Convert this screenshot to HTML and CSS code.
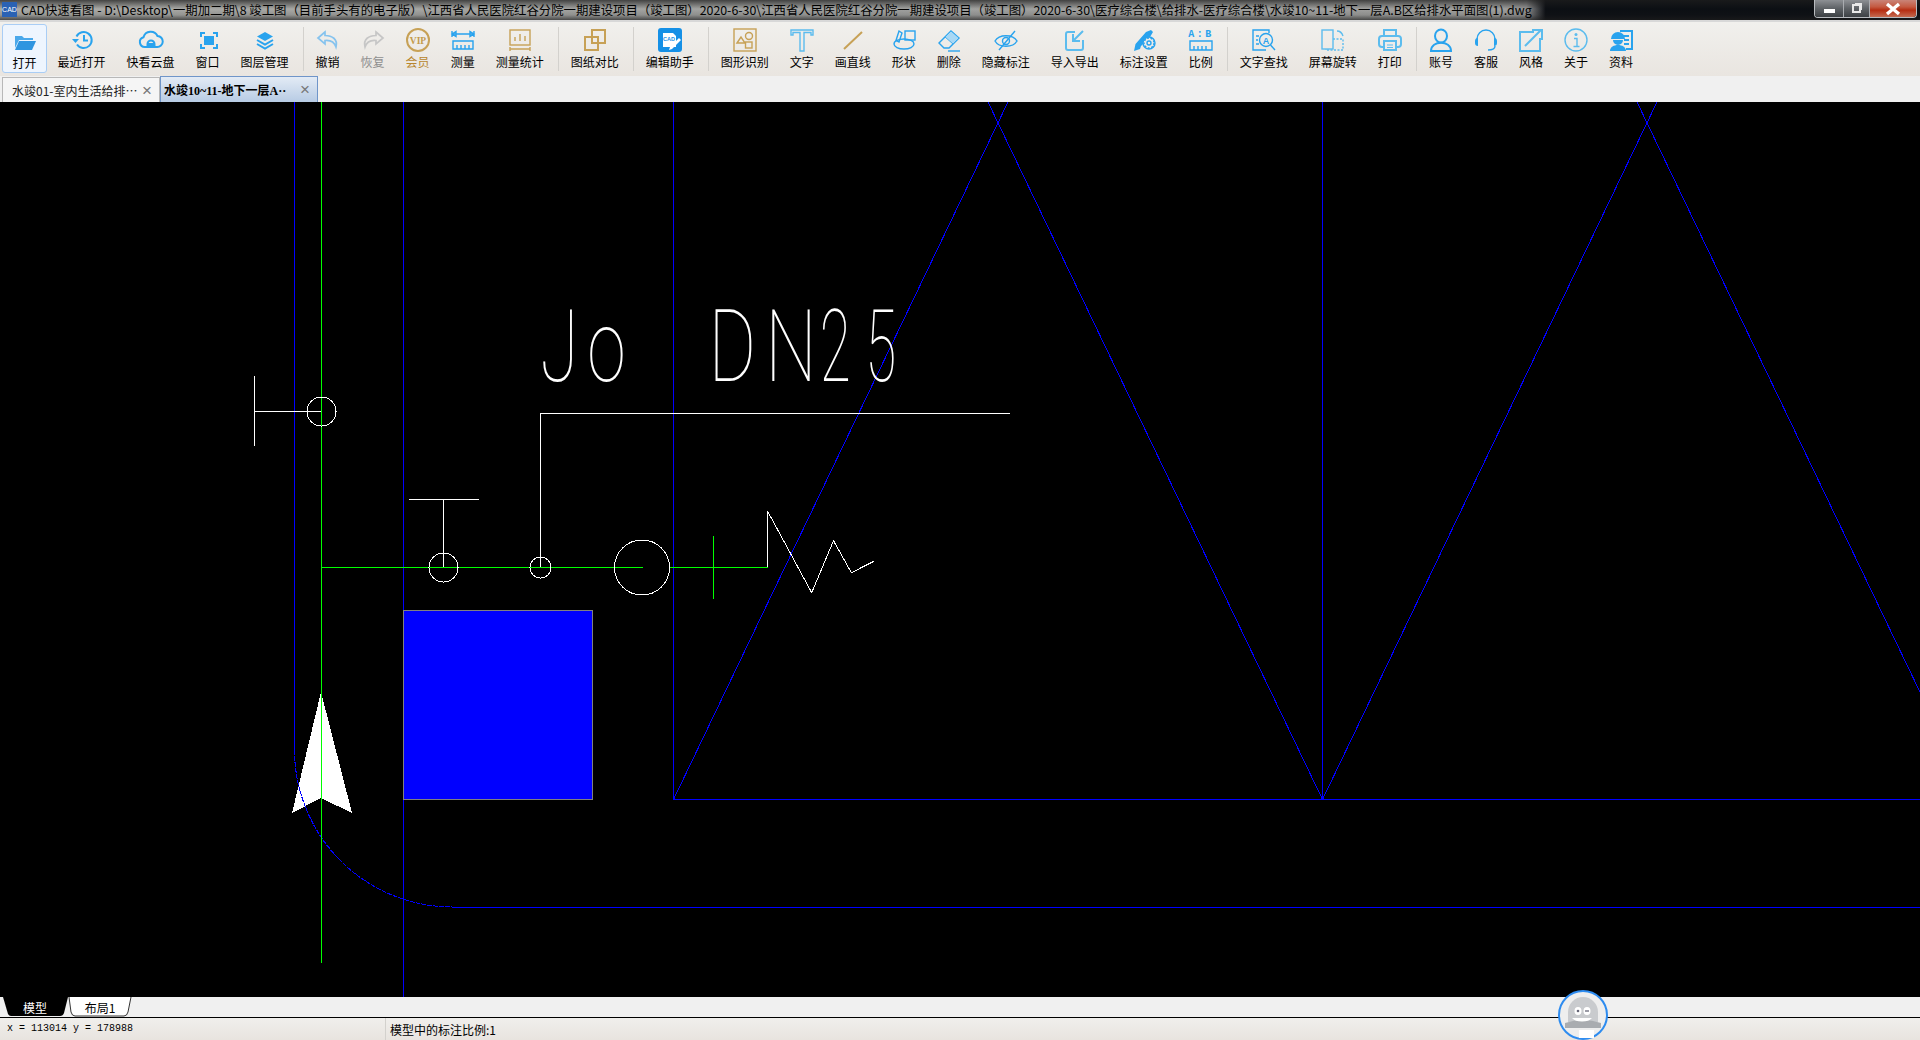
FILE: index.html
```html
<!DOCTYPE html>
<html lang="zh-CN">
<head>
<meta charset="utf-8">
<title>CAD快速看图</title>
<link rel="stylesheet" href="styles.css">
</head>
<body>
<div class="app">
  <header class="titlebar">
    <div class="app-logo">CAD</div>
    <div class="title-text">CAD快速看图 - D:\Desktop\一期加二期\8 竣工图（目前手头有的电子版）\江西省人民医院红谷分院一期建设项目（竣工图）2020-6-30\江西省人民医院红谷分院一期建设项目（竣工图）2020-6-30\医疗综合楼\给排水-医疗综合楼\水竣10~11-地下一层A.B区给排水平面图(1).dwg</div>
    <div class="win-buttons">
      <div class="win-btn win-min"><span class="glyph-min"></span></div>
      <div class="win-btn win-max"><span class="glyph-max"></span></div>
      <div class="win-btn win-close">
        <svg width="20" height="14" viewBox="0 0 20 14"><path d="M4 2l12 10M16 2L4 12" stroke="#fff" stroke-width="3.4" fill="none"/></svg>
      </div>
    </div>
  </header>

  <nav class="toolbar">
    <div class="tool active"><svg class="ico" viewBox="0 0 24 24"><path d="M2 7h7l2 2h9v2H6l-4 8z" fill="#4aa8ea"/><path d="M6 12h17l-4 9H2z" fill="#2f95e0"/></svg><span>打开</span></div>
    <div class="tool"><svg class="ico line-blue" viewBox="0 0 24 24"><path d="M6.5 8.5A8 8 0 1 1 7 16.5"/><path class="solid" d="M2 11h7l-3.5 4z"/><path d="M14 7v5.5h4"/></svg><span>最近打开</span></div>
    <div class="tool"><svg class="ico line-blue" viewBox="0 0 24 24"><path d="M6 19a5 5 0 0 1-1.500-9.800 7.500 7.500 0 0 1 14-1.200A5.500 5.500 0 0 1 18 19z"/><path d="M8.500 18v-2a3.500 3.500 0 0 1 7 0v2zM8.500 16h7"/></svg><span>快看云盘</span></div>
    <div class="tool"><svg class="ico line-blue" viewBox="0 0 24 24"><path d="M5 9V5h4M17 5h4v4M21 16v4h-4M9 20H5v-4"/><rect class="solid" x="8" y="8" width="10" height="9"/></svg><span>窗口</span></div>
    <div class="tool"><svg class="ico line-blue" viewBox="0 0 24 24"><path class="solid" d="M12 4l8 4.500-8 4.500-8-4.500z"/><path d="M4 12l8 4.500 8-4.500M4 16l8 4.500 8-4.500"/></svg><span>图层管理</span></div>
    <div class="sep"></div>
    <div class="tool"><svg class="ico line-pale" viewBox="0 0 24 24"><path d="M9 4L2 10l7 6v-3.500c5-.5 9 .5 11 6.500 2-8-4-11.500-11-11.500z"/></svg><span>撤销</span></div>
    <div class="tool muted"><svg class="ico line-grey" viewBox="0 0 24 24"><path d="M15 4l7 6-7 6v-3.500c-5-.5-9 .5-11 6.500-2-8 4-11.500 11-11.500z"/></svg><span>恢复</span></div>
    <div class="tool vip"><svg class="ico line-gold" viewBox="0 0 24 24"><circle cx="12" cy="12" r="11"/><text class="vip-text" x="12" y="16">VIP</text></svg><span>会员</span></div>
    <div class="tool"><svg class="ico line-blue thin" viewBox="0 0 24 24"><path d="M1 3v6M23 3v6M1 6h22M1 6l4-2.500v5zM23 6l-4-2.500v5z"/><path d="M2 13h20v8H2zM6 17v4M10 17v4M14 17v4M18 17v4"/></svg><span>测量</span></div>
    <div class="tool"><svg class="ico line-gold thin" viewBox="0 0 24 24"><rect x="2" y="2" width="20" height="15"/><path d="M7 13V9M12 13V6M17 13v-5M2 21h20M2 19v4M22 19v4"/></svg><span>测量统计</span></div>
    <div class="sep"></div>
    <div class="tool"><svg class="ico line-gold" viewBox="0 0 24 24"><rect x="9" y="2" width="13" height="13"/><rect x="2" y="9" width="13" height="13"/></svg><span>图纸对比</span></div>
    <div class="sep"></div>
    <div class="tool"><svg class="ico" viewBox="0 0 24 24"><rect width="24" height="24" rx="3" fill="#1590e6"/><path d="M5 5h10l3 3v11H5z" fill="#fff"/><text class="cad-text" x="11" y="13">CAD</text><path d="M12 19l9-9 2 2-9 9-3 1z" fill="#fff"/></svg><span>编辑助手</span></div>
    <div class="sep"></div>
    <div class="tool"><svg class="ico line-gold thin" viewBox="0 0 24 24"><rect x="1" y="1" width="22" height="22"/><path d="M4 15l4-6 4 6z"/><circle cx="16" cy="8" r="3.500"/><rect x="12.500" y="14" width="6.500" height="6"/></svg><span>图形识别</span></div>
    <div class="tool"><svg class="ico line-sky thin" viewBox="0 0 24 24"><path d="M1 2h22v5h-2V4.500h-7V23h-4V4.500H3V7H1z"/></svg><span>文字</span></div>
    <div class="tool"><svg class="ico line-gold" viewBox="0 0 24 24"><path d="M3 21L21 4"/></svg><span>画直线</span></div>
    <div class="tool"><svg class="ico line-blue thin" viewBox="0 0 24 24"><rect x="13" y="3" width="10" height="9"/><ellipse cx="12" cy="16" rx="10" ry="5"/><path d="M7 3l3 2-3 9-3-1.500z"/></svg><span>形状</span></div>
    <div class="tool"><svg class="ico line-blue thin" viewBox="0 0 24 24"><path d="M14 3l8 7-10 10H7l-5-5z"/><path class="solid-pale" d="M14 3l8 7-6 6-8-7z"/><path d="M11 23h12"/></svg><span>删除</span></div>
    <div class="tool"><svg class="ico line-blue thin" viewBox="0 0 24 24"><path d="M1 13c4-7 18-7 22 0-4 7-18 7-22 0z"/><circle cx="12" cy="13" r="3.500"/><path d="M21 3L5 22"/></svg><span>隐藏标注</span></div>
    <div class="tool"><svg class="ico line-sky" viewBox="0 0 24 24"><path d="M12 4H5a2 2 0 0 0-2 2v14a2 2 0 0 0 2 2h13a2 2 0 0 0 2-2v-8"/><path d="M20 3L10 13M10 6v7h7"/></svg><span>导入导出</span></div>
    <div class="tool"><svg class="ico line-blue thin" viewBox="0 0 24 24"><path class="solid" d="M2 23l1.500-7L14 4l5-2 2 2-3 5-9 9-1 3z"/><circle class="paper" cx="17" cy="15" r="6"/><circle cx="17" cy="15" r="2"/><circle class="dash" cx="17" cy="15" r="5"/></svg><span>标注设置</span></div>
    <div class="tool"><svg class="ico line-blue thin" viewBox="0 0 24 24"><text class="ab-text" x="12" y="9">A:B</text><path d="M1 13h22v9H1zM5 18v4M9 18v4M13 18v4M17 18v4"/></svg><span>比例</span></div>
    <div class="sep"></div>
    <div class="tool"><svg class="ico line-blue thin" viewBox="0 0 24 24"><path d="M6 2H1v20h13M1 2h16v3"/><path d="M4 8h3M4 12h2M4 16h3"/><circle cx="14" cy="12" r="6.500"/><path d="M18.500 17l4.500 5"/><text class="find-text" x="14" y="15.500">A</text></svg><span>文字查找</span></div>
    <div class="tool"><svg class="ico line-sky thin" viewBox="0 0 24 24"><rect x="1" y="2" width="11" height="19"/><path class="dash" d="M12 11h10v11H5v-1"/><path d="M16 3c3 0 5 2 6 5"/></svg><span>屏幕旋转</span></div>
    <div class="tool"><svg class="ico line-sky" viewBox="0 0 24 24"><path d="M6 8V2h12v6"/><rect x="1" y="8" width="22" height="11" rx="3"/><rect class="paper" x="6" y="13" width="12" height="9"/><path d="M9 17h6M9 19.500h6" stroke-width="1"/></svg><span>打印</span></div>
    <div class="sep"></div>
    <div class="tool"><svg class="ico line-blue" viewBox="0 0 24 24"><ellipse cx="12" cy="8" rx="6" ry="6.500"/><path d="M2 23c0-11 20-11 20 0z"/></svg><span>账号</span></div>
    <div class="tool"><svg class="ico line-blue thin" viewBox="0 0 24 24"><path d="M3 13v-2a9 9 0 0 1 18 0v2"/><path class="solid" d="M1 13a3 3 0 0 1 3-3v8a3 3 0 0 1-3-3zM23 13a3 3 0 0 0-3-3v8a3 3 0 0 0 3-3z"/><path d="M21 18c0 3-3 4-7 4"/></svg><span>客服</span></div>
    <div class="tool"><svg class="ico line-sky" viewBox="0 0 24 24"><path d="M15 4H1v19h20V10"/><path d="M6 18L22 2M13 2h10v10"/></svg><span>风格</span></div>
    <div class="tool"><svg class="ico line-sky thin" viewBox="0 0 24 24"><circle cx="12" cy="12" r="11"/><circle class="solid" cx="12" cy="6.500" r="1.500"/><path d="M10 10.500h3v8M9.500 18.500h6"/></svg><span>关于</span></div>
    <div class="tool"><svg class="ico line-blue" viewBox="0 0 24 24"><path d="M11 3h12v18H17M14 8h6M15 12h5M15 16h5"/><path class="solid" d="M2 11a7 7 0 0 1 14 0zM4 12h10a5 5 0 0 1-10 0zM1 23c0-8 16-8 16 0z"/></svg><span>资料</span></div>
  </nav>

  <div class="doc-tabs">
    <div class="doc-tab"><span class="doc-name">水竣01-室内生活给排…</span><span class="doc-close">×</span></div>
    <div class="doc-tab current"><span class="doc-name">水竣10~11-地下一层A··</span><span class="doc-close">×</span></div>
  </div>

  <main class="canvas">
    <svg class="drawing" viewBox="0 102 1920 895" width="1920" height="895">
      <g class="blue">
        <path d="M294.500 102V750"/>
        <path class="arc" d="M294.500 750A158 157 0 0 0 452 907"/>
        <path d="M452 907.500H1920"/>
        <path d="M403.500 102V997"/>
        <path d="M673.500 102V799.500H1920"/>
        <path d="M1322.500 102V799.500"/>
        <path d="M673.500 799.500L1008 102"/>
        <path d="M1322.500 799.500L988 102"/>
        <path d="M1322.500 799.500L1657 102"/>
        <path d="M1971.500 799.500L1637 102"/>
      </g>
      <rect class="sq" x="403.500" y="610.500" width="189" height="189"/>
      <path class="arrow" d="M321 692L352 813 321 798 292 813z"/>
      <path class="arc blue-arc" d="M294.500 750A158 157 0 0 0 340 860"/>
      <g class="green">
        <path d="M321.500 102V963"/>
        <path d="M321.500 567.500H643M669.500 567.500H767.500"/>
        <path d="M713.500 536V599"/>
      </g>
      <g class="white">
        <path d="M254.500 376V446M254.500 411.500H321"/>
        <circle cx="321.500" cy="411.500" r="14.500"/>
        <path d="M540.500 567V413.500H1010"/>
        <path d="M409 499.500H479M443.500 499.500V567"/>
        <circle cx="443.500" cy="567.500" r="14.500"/>
        <circle cx="540.500" cy="567.500" r="10.500"/>
        <circle cx="642" cy="567.500" r="27.500"/>
        <path d="M767.500 567V511L811.700 592.700 833.500 540.700 851.400 572.700 873.800 561.300"/>
      </g>
      <text class="cad-note" transform="scale(.69 1)" y="381" x="783 851">Jo</text>
      <text class="cad-note" transform="scale(.72 1)" y="381" x="984 1063">DN</text>
      <text class="cad-note" transform="scale(.56 1)" y="381" x="1464 1545">25</text>
    </svg>
  </main>

  <div class="sheet-tabs">
    <div class="sheet-tab model"><svg class="tab-shape" viewBox="0 0 66 20" preserveAspectRatio="none"><path d="M1 0l5 17q1 2 3 2h49q3 0 4-3l4-16z" fill="#000"/></svg><span>模型</span></div>
    <div class="sheet-tab layout"><svg class="tab-shape" viewBox="0 0 64 20" preserveAspectRatio="none"><path d="M1 0l2 15q1 4 4 4h49q3 0 4-4l3-15" fill="#fff" stroke="#333"/></svg><span>布局1</span></div>
  </div>

  <footer class="statusbar">
    <div class="coords">x = 113014 y = 178988</div>
    <div class="scale-note">模型中的标注比例:1</div>
  </footer>

  <div class="assistant">
    <svg viewBox="0 0 50 50" width="50" height="50">
      <circle cx="25" cy="25" r="24" fill="#eeeeee" stroke="#2e8cf0" stroke-width="2"/>
      <path d="M10 32V22a15 15 0 0 1 30 0v10z" fill="#c9cbce"/>
      <path d="M7 33q18-6 36 0v5H7z" fill="#a9acb0"/>
      <ellipse cx="20" cy="21" rx="3.500" ry="4" fill="#fff"/><ellipse cx="29" cy="21" rx="3.500" ry="4" fill="#fff"/>
      <circle cx="20" cy="21" r="1.300" fill="#667"/><path d="M27 21h4" stroke="#667" stroke-width="1.300"/>
      <path d="M14 28h20q-3 3.500-10 3.500T14 28z" fill="#fff"/>
      <rect x="21" y="40" width="15" height="8" fill="#fff"/>
    </svg>
  </div>
</div>
</body>
</html>
```
FILE: styles.css
```css
* { box-sizing: border-box; }
html, body { margin: 0; padding: 0; height: 100%; overflow: hidden; }
body { font-family: "Noto Sans CJK SC", "Liberation Sans", sans-serif; font-size: 12px; color: #000; }

.app { position: relative; display: flex; flex-direction: column; width: 1920px; height: 1040px; background: #f0f0f0; }

/* title bar */
.titlebar {
  flex: 0 0 22px; display: flex; align-items: flex-start; height: 22px;
  border-bottom: 2px solid #d8d8d8; overflow: hidden;
  background:
    linear-gradient(180deg, rgba(30,30,30,.75) 0, rgba(30,30,30,.05) 45%, rgba(30,30,30,.2) 75%, rgba(30,30,30,.7) 100%),
    linear-gradient(90deg, #b4b4b0 0, #a9aaa8 40%, #a8a8a6 78%, #9c9c9c 79.500%, #0b0e13 80.500%, #0b0e13 100%);
}
.app-logo { flex: 0 0 15px; height: 15px; margin: 2px 4px 0 2px; background: #2a62b4; color: #fff; font-size: 7px; line-height: 15px; text-align: center; overflow: hidden; font-family: "Liberation Sans", sans-serif; }
.title-text { flex: 1 1 auto; font-size: 12.380px; line-height: 20px; white-space: nowrap; overflow: hidden; color: #000; }
.win-buttons { flex: 0 0 103px; display: flex; height: 18px; margin-right: 3px; border: 1px solid #b9bcc0; border-top: 0; border-radius: 0 0 4px 4px; overflow: hidden; }
.win-btn { display: flex; align-items: center; justify-content: center; height: 100%; border-right: 1px solid #a9acb0; }
.win-min { flex: 0 0 29px; background: linear-gradient(180deg, #8d9094, #5e6266 50%, #3c4044); }
.win-max { flex: 0 0 26px; background: linear-gradient(180deg, #8d9094, #5e6266 50%, #3c4044); }
.win-close { flex: 1 1 auto; border-right: 0; background: linear-gradient(180deg, #c98478, #c45a42 40%, #b52d12 60%, #c46a50); }
.glyph-min { display: block; width: 11px; height: 4px; margin-top: 4px; background: #fff; }
.glyph-max { display: block; width: 9px; height: 9px; border: 2px solid #e8e8e8; box-shadow: 2px -2px 0 -1px #e8e8e8; }

/* main toolbar */
.toolbar {
  flex: 0 0 54px; display: flex; align-items: flex-start; padding: 0;
  background: linear-gradient(180deg, #f1f0ed, #e9e5e0);
}
.tool { display: flex; flex-direction: column; align-items: center; padding: 6px 10.500px 0; height: 54px; white-space: nowrap; line-height: 14px; }
.tool span { margin-top: 3px; }
.ico { display: block; flex: 0 0 24px; width: 24px; height: 24px; overflow: visible; }
.tool.active { margin: 2px 0 0 2px; height: 49px; padding: 4px 9.500px 0; background: #eef5fe; border: 1px solid #a9cdf5; border-radius: 3px; }
.tool.muted { color: #8f8f8f; }
.tool.vip { color: #b8862d; }
.sep { flex: 0 0 1px; width: 1px; height: 44px; margin: 5px 1px 0 4px; background: #d3d1cd; }

.line-blue, .line-sky, .line-pale, .line-grey, .line-gold { fill: none; stroke-width: 2; }
.line-blue { stroke: #29a3ee; }
.line-sky { stroke: #5cbcee; }
.line-pale { stroke: #86c3ee; stroke-width: 1.700; }
.line-grey { stroke: #c6c6c6; stroke-width: 1.700; }
.line-gold { stroke: #c7a156; }
.thin { stroke-width: 1.400; }
.solid { fill: #29a3ee; stroke: none; }
.line-sky .solid { fill: #5cbcee; }
.solid-pale { fill: #a8d8f5; stroke-width: .8; }
.paper { fill: #eeecea; }
.dash { stroke-dasharray: 2 1.500; }
.vip-text { fill: #c39a4a; stroke: none; font: bold 9.500px "Liberation Serif", serif; text-anchor: middle; }
.cad-text { fill: #1590e6; stroke: none; font: bold 5.500px "Liberation Sans", sans-serif; text-anchor: middle; }
.ab-text { fill: #29a3ee; stroke: none; font: bold 10px "Liberation Mono", monospace; letter-spacing: 2.500px; text-anchor: middle; }
.find-text { fill: #29a3ee; stroke: none; font: bold 9px "Liberation Sans", sans-serif; text-anchor: middle; }

/* document tabs */
.doc-tabs { flex: 0 0 26px; display: flex; align-items: flex-end; padding-left: 2px; background: #f0f0f0; }
.doc-tab { display: flex; align-items: center; width: 158px; height: 25px; padding: 0 7px 0 9px; border: 1px solid #b8b8b8; border-bottom: 0; background: #f5f5f5; }
.doc-name { flex: 1 1 auto; white-space: nowrap; overflow: hidden; font-size: 12px; color: #222; }
.doc-close { flex: 0 0 auto; font: 17px/1 "Liberation Sans", sans-serif; color: #777; }
.doc-tab.current { width: 158px; height: 26px; padding-left: 3px; border-color: #6f95c9; background: linear-gradient(180deg, #e3ebf5, #b7cbe4); }
.current .doc-name { font: bold 12px "Liberation Serif", "Noto Sans CJK SC", serif; color: #000; }

/* drawing */
.canvas { flex: 0 0 895px; height: 895px; background: #000; overflow: hidden; }
.drawing { display: block; shape-rendering: crispEdges; }
.blue path { stroke: #0000ff; stroke-width: 1; fill: none; }
.blue .arc, .blue-arc { stroke: #0000ff; fill: none; stroke-dasharray: 5 1; }
.sq { fill: #0000ff; stroke: #808080; stroke-width: 1; }
.arrow { fill: #fff; }
.green path { stroke: #00ff00; stroke-width: 1; fill: none; }
.white path, .white circle { stroke: #fff; stroke-width: 1; fill: none; }
.cad-note { fill: #fff; font-family: Roboto, "Liberation Sans", sans-serif; font-weight: 100; font-size: 101px; shape-rendering: auto; }

/* sheet tabs */
.sheet-tabs { flex: 0 0 21px; display: flex; align-items: flex-start; padding-left: 2px; background: #f0f0f0; border-bottom: 1px solid #000; }
.sheet-tab { position: relative; display: flex; align-items: center; justify-content: center; height: 20px; font-size: 12px; }
.sheet-tab span { position: relative; }
.tab-shape { position: absolute; left: 0; top: 0; width: 100%; height: 100%; }
.model { width: 66px; color: #fff; }
.layout { width: 64px; color: #000; }

/* status bar */
.statusbar { flex: 1 1 auto; display: flex; align-items: center; background: linear-gradient(180deg, #f0efec, #e8e4df); }
.coords { flex: 0 0 386px; padding-left: 7px; font: 10px "Liberation Mono", monospace; height: 100%; line-height: 22px; border-right: 1px solid #d3d1cd; }
.scale-note { padding-left: 4px; font-size: 12px; }

/* floating assistant */
.assistant { position: absolute; left: 1558px; top: 990px; width: 50px; height: 50px; }
```
